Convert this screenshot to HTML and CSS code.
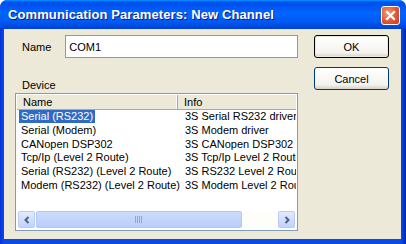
FILE: index.html
```html
<!DOCTYPE html>
<html lang="en">
  <head>
    <meta charset="UTF-8" />
    <title>Communication Parameters</title>
    <link rel="stylesheet" href="styles.css">
  </head>
  <body>
    <div class="window">
      <div class="titlebar">
        <span class="title">Communication Parameters: New Channel</span>
        <div class="close">
          <svg width="11" height="11" viewBox="0 0 11 11">
            <path d="M2 2 L9 9 M9 2 L2 9" stroke="#fff" stroke-width="2.2" stroke-linecap="square" />
          </svg>
        </div>
      </div>
      <div class="body">
        <div class="main">
          <div class="name-row">
            <span class="label">Name</span>
            <div class="field">COM1</div>
          </div>
          <div class="device-label">Device</div>
          <div class="list">
            <div class="list-head">
              <div class="col-name">Name</div>
              <div class="col-info">Info</div>
            </div>
            <div class="rows">
              <div class="row selected"><span class="cell-name"><span class="sel">Serial (RS232)</span></span><span class="cell-info">3S Serial RS232 driver</span></div>
              <div class="row"><span class="cell-name">Serial (Modem)</span><span class="cell-info">3S Modem driver</span></div>
              <div class="row"><span class="cell-name">CANopen DSP302</span><span class="cell-info">3S CANopen DSP302 driver</span></div>
              <div class="row"><span class="cell-name">Tcp/Ip (Level 2 Route)</span><span class="cell-info">3S Tcp/Ip Level 2 Route</span></div>
              <div class="row"><span class="cell-name">Serial (RS232) (Level 2 Route)</span><span class="cell-info">3S RS232 Level 2 Route</span></div>
              <div class="row"><span class="cell-name">Modem (RS232) (Level 2 Route)</span><span class="cell-info">3S Modem Level 2 Route</span></div>
            </div>
            <div class="hscroll">
              <div class="arrow">
                <svg width="8" height="8" viewBox="0 0 8 8"><path d="M5.5 1 L2.5 4 L5.5 7" fill="none" stroke="#4d6185" stroke-width="2" /></svg>
              </div>
              <div class="track">
                <div class="thumb">
                  <svg width="8" height="7" viewBox="0 0 8 7"><path d="M0.5 0 V7 M2.5 0 V7 M4.5 0 V7 M6.5 0 V7" stroke="#8ba6e4" stroke-width="1" /></svg>
                </div>
              </div>
              <div class="arrow">
                <svg width="8" height="8" viewBox="0 0 8 8"><path d="M2.5 1 L5.5 4 L2.5 7" fill="none" stroke="#4d6185" stroke-width="2" /></svg>
              </div>
            </div>
          </div>
        </div>
        <div class="buttons">
          <div class="btn default">OK</div>
          <div class="btn">Cancel</div>
        </div>
      </div>
    </div>
  </body>
</html>
```

FILE: styles.css
```css
body {
  margin: 0;
  background: #ffffff;
  font-family: "Liberation Sans", Arial, sans-serif;
  font-size: 11px;
  color: #000;
}

.window {
  width: 406px;
  height: 244px;
  display: flex;
  flex-direction: column;
  box-sizing: border-box;
  padding: 0 5px 5px 4px;
  border-radius: 7px 7px 0 0;
  background: linear-gradient(to right, #0831d9, #0a4ae8 4px, #0a4ae8 calc(100% - 5px), #0026b5);
  overflow: hidden;
}

.titlebar {
  height: 29px;
  margin: 0 -5px 0 -4px;
  padding: 0 8px 0 8px;
  display: flex;
  align-items: center;
  justify-content: space-between;
  border-radius: 7px 7px 0 0;
  background: linear-gradient(to bottom, #0997ff 0, #0053ee 2px, #0050ee 5px, #0066ff 13px, #0059f3 22px, #0048dc 27px, #003dd7 29px);
}

.title {
  color: #fff;
  font-weight: bold;
  font-size: 13px;
  letter-spacing: 0.1px;
  text-shadow: 1px 1px 0 #0a1e8a;
}

.close {
  width: 19px;
  height: 19px;
  margin-top: 2px;
  margin-right: -2px;
  box-sizing: border-box;
  border: 1px solid #fff;
  border-radius: 3px;
  background: radial-gradient(circle at 35% 35%, #f29a7a, #e2512a 60%, #c53d1a);
  display: flex;
  align-items: center;
  justify-content: center;
}

.body {
  flex: 1;
  background: #ece9d8;
  display: flex;
  padding: 6px 12px 0 11px;
  gap: 16px;
}

.main {
  width: 283px;
  display: flex;
  flex-direction: column;
}

.name-row {
  display: flex;
  align-items: center;
  gap: 14px;
  padding-left: 7px;
}

.field {
  flex: 1;
  height: 23px;
  box-sizing: border-box;
  border: 1px solid #7f9db9;
  background: #fff;
  padding: 4px 3px;
  line-height: 14px;
}

.device-label {
  margin-top: 21px;
  padding-left: 7px;
  line-height: 13px;
}

.list {
  margin-top: 1px;
  height: 138px;
  box-sizing: border-box;
  border: 1px solid #7f9db9;
  background: #fff;
  display: flex;
  flex-direction: column;
  padding: 1px;
  overflow: hidden;
}

.list-head {
  display: flex;
  height: 14px;
  background: #ece9d8;
  border-bottom: 1px solid #aca899;
  line-height: 14px;
}

.col-name {
  width: 161px;
  padding-left: 6px;
  box-sizing: border-box;
  border-right: 1px solid #aca899;
  box-shadow: inset -1px 0 #fff;
}

.col-info {
  flex: 1;
  padding-left: 6px;
  white-space: nowrap;
  overflow: hidden;
}

.rows {
  flex: 1;
}

.row {
  display: flex;
  height: 13.8px;
  line-height: 13px;
  white-space: nowrap;
}

.cell-name {
  display: inline-block;
  width: 162px;
  padding-left: 4px;
  box-sizing: border-box;
}

.sel {
  display: inline-block;
}

.selected .sel {
  background: #316ac5;
  color: #fff;
  padding: 0 2px;
  margin-left: -2px;
}

.cell-info {
  flex: 1;
  padding-left: 6px;
  overflow: hidden;
}

.hscroll {
  height: 17px;
  display: flex;
  margin: 0 1px 1px 1px;
  background: #fdfdfa;
}

.arrow {
  width: 17px;
  height: 17px;
  box-sizing: border-box;
  border: 1px solid #b9cbf3;
  border-radius: 2px;
  background: linear-gradient(to bottom, #e2eafe, #c1d3fb);
  display: flex;
  align-items: center;
  justify-content: center;
}

.track {
  flex: 1;
  display: flex;
  padding: 0 36px 0 1px;
}

.thumb {
  flex: 1;
  box-sizing: border-box;
  border: 1px solid #b2c7f4;
  border-radius: 2px;
  background: linear-gradient(to bottom, #cddcfc, #b8cdfa);
  display: flex;
  align-items: center;
  justify-content: center;
}

.buttons {
  display: flex;
  flex-direction: column;
  gap: 9px;
}

.btn {
  width: 75px;
  height: 23px;
  box-sizing: border-box;
  border: 1px solid #003c74;
  border-radius: 3px;
  background: linear-gradient(to bottom, #fff, #f4f3ee 80%, #d6d0c5);
  display: flex;
  align-items: center;
  justify-content: center;
}

.btn.default {
  border: 1px solid #000;
  box-shadow: inset 0 0 0 1px #ece9d8;
}
```
